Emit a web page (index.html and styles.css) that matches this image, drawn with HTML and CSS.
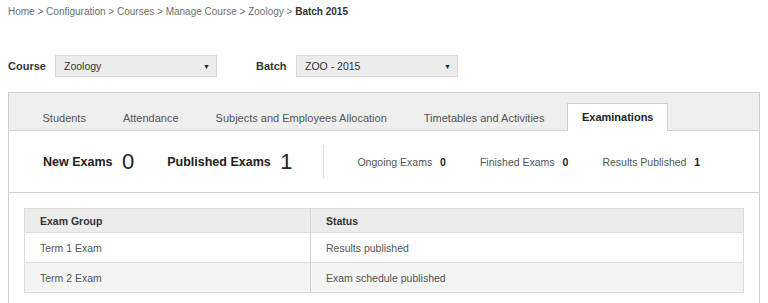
FILE: index.html
```html
<!DOCTYPE html>
<html lang="en">
  <head>
    <meta charset="UTF-8" />
    <title>Batch 2015</title>
    <link rel="stylesheet" href="styles.css">
  </head>
  <body>
    <div class="breadcrumb">
      <a href="#">Home</a> &gt; <a href="#">Configuration</a> &gt;
      <a href="#">Courses</a> &gt; <a href="#">Manage Course</a> &gt;
      <a href="#">Zoology</a> &gt; <span class="current">Batch 2015</span>
    </div>

    <div class="filters">
      <label class="filter-label">Course</label>
      <div class="select">
        <span>Zoology</span>
        <span class="caret">&#9660;</span>
      </div>
      <label class="filter-label batch-label">Batch</label>
      <div class="select">
        <span>ZOO - 2015</span>
        <span class="caret">&#9660;</span>
      </div>
    </div>

    <div class="panel">
      <ul class="tabs">
        <li>Students</li>
        <li>Attendance</li>
        <li>Subjects and Employees Allocation</li>
        <li>Timetables and Activities</li>
        <li class="active">Examinations</li>
      </ul>

      <div class="stats">
        <div class="stat-big">New Exams <span class="num">0</span></div>
        <div class="stat-big">Published Exams <span class="num">1</span></div>
        <div class="stats-divider"></div>
        <div class="stat-small">Ongoing Exams <b>0</b></div>
        <div class="stat-small">Finished Exams <b>0</b></div>
        <div class="stat-small">Results Published <b>1</b></div>
      </div>

      <div class="table-wrap">
        <table>
          <thead>
            <tr>
              <th class="col-group">Exam Group</th>
              <th>Status</th>
            </tr>
          </thead>
          <tbody>
            <tr>
              <td>Term 1 Exam</td>
              <td>Results published</td>
            </tr>
            <tr class="alt">
              <td>Term 2 Exam</td>
              <td>Exam schedule published</td>
            </tr>
          </tbody>
        </table>
      </div>
    </div>
  </body>
</html>
```

FILE: styles.css
```css
body {
  font-family: "Liberation Sans", Arial, sans-serif;
  font-size: 11px;
  color: #444;
  margin: 0;
  padding: 4px 8px 0 8px;
  background-color: #ffffff;
}

.breadcrumb {
  line-height: 16px;
  font-size: 10px;
  color: #6e6e6e;
}

.breadcrumb a {
  color: #6e6e6e;
  text-decoration: none;
}

.breadcrumb .current {
  color: #333;
  font-weight: bold;
}

.filters {
  display: flex;
  align-items: center;
  margin-top: 35px;
  height: 22px;
}

.filter-label {
  font-weight: bold;
  color: #333;
  width: 47px;
}

.batch-label {
  margin-left: 39px;
  width: 40px;
}

.select {
  display: flex;
  justify-content: space-between;
  align-items: center;
  box-sizing: border-box;
  width: 162px;
  height: 22px;
  padding: 0 6px 0 8px;
  background-color: #ececec;
  border: 1px solid #d8d8d8;
  color: #333;
  font-size: 10.5px;
}

.select .caret {
  font-size: 7px;
  color: #222;
}

.panel {
  margin-top: 15px;
  border: 1px solid #cfcfcf;
  border-bottom: none;
  width: 750px;
  padding-bottom: 10px;
}

.tabs {
  display: flex;
  align-items: flex-end;
  list-style: none;
  margin: 0;
  padding: 0 0 0 15px;
  height: 37px;
  background-color: #eeeeee;
  border-bottom: 1px solid #cfcfcf;
  white-space: nowrap;
}

.tabs li {
  padding: 0 17.5px;
  line-height: 26px;
  color: #555;
  margin-bottom: -1px;
  border: 1px solid transparent;
  border-bottom: none;
}

.tabs li.active {
  background-color: #ffffff;
  border-color: #cfcfcf;
  color: #222;
  font-weight: bold;
  padding: 0 14px 0 14px;
  margin-left: 4px;
  height: 27px;
}

.stats {
  display: flex;
  align-items: center;
  height: 61px;
  padding-left: 34px;
  border-bottom: 1px solid #cfcfcf;
  white-space: nowrap;
}

.stat-big {
  font-size: 12.5px;
  font-weight: bold;
  color: #222;
  margin-right: 33px;
}

.stat-big .num {
  font-size: 22px;
  font-weight: normal;
  margin-left: 6px;
  vertical-align: -3px;
}

.stats-divider {
  width: 1px;
  height: 33px;
  background-color: #dddddd;
  margin-left: -2px;
  margin-right: 33px;
}

.stat-small {
  font-size: 10.5px;
  color: #555;
  margin-right: 34px;
}

.stat-small b {
  color: #222;
  margin-left: 5px;
}

.table-wrap {
  padding: 15px 15px 0 15px;
}

table {
  width: 720px;
  border-collapse: collapse;
  border: 1px solid #dcdcdc;
  font-size: 10.5px;
}

th {
  text-align: left;
  background-color: #ececec;
  color: #333;
  height: 23px;
  padding: 0 15px;
}

th.col-group {
  width: 255px;
  border-right: 1px solid #d4d4d4;
}

td {
  height: 29px;
  padding: 0 15px;
  color: #555;
  border-top: 1px solid #dcdcdc;
}

td:first-child {
  border-right: 1px solid #d4d4d4;
}

tr.alt td {
  background-color: #f4f4f4;
}
```
